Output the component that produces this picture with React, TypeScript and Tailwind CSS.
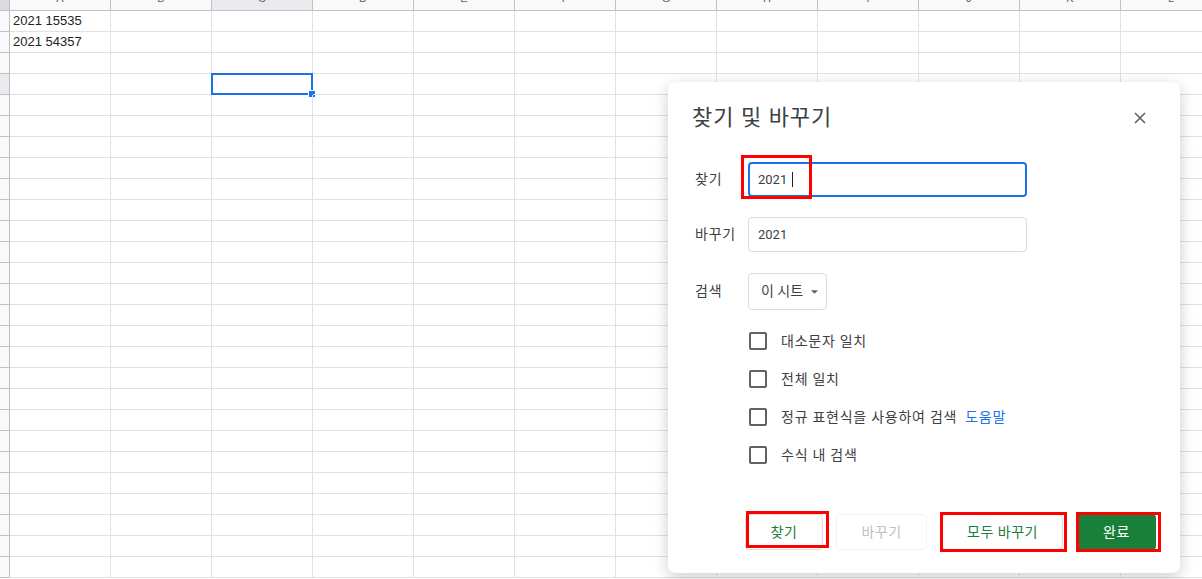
import React from 'react';

const COLS = ['A', 'B', 'C', 'D', 'E', 'F', 'G', 'H', 'I', 'J', 'K', 'L'];
const ROWS = Array.from({ length: 27 }, (_, i) => i + 1);

// cell values keyed by address
const cellData: Record<string, string> = {
  A1: '2021 15535',
  A2: '2021 54357',
};

const options = [
  { id: 'case', label: '대소문자 일치' },
  { id: 'whole', label: '전체 일치' },
  { id: 'regex', label: '정규 표현식을 사용하여 검색', help: '도움말' },
  { id: 'formula', label: '수식 내 검색' },
];

const Checkbox = ({ label, help }: { label: string; help?: string }) => (
  <div className="flex h-[38px] items-center">
    <div className="h-[18px] w-[18px] shrink-0 rounded-[2px] border-2 border-[#5f6368]" />
    <span className="ml-[14px] text-[14px] tracking-[0.75px] text-[#3c4043]">{label}</span>
    {help && <span className="ml-[8px] text-[14px] tracking-[0.75px] text-[#1a73e8]">{help}</span>}
  </div>
);

const RedBox = ({ className }: { className: string }) => (
  <div className={`pointer-events-none absolute border-[3px] border-[#ff0000] ${className}`} />
);

function Sheet() {
  return (
    <div className="flex flex-col font-['Liberation_Sans',Arial,sans-serif]">
      {/* column header, scrolled so only the bottom of the letters shows */}
      <div className="flex h-[11px]">
        <div className="w-[10px] shrink-0 border-r border-b border-[#c0c0c0] bg-[#dadce0]" />
        {COLS.map((c) => (
          <div
            key={c}
            className={`relative w-[101px] shrink-0 overflow-hidden border-r border-b border-[#c0c0c0] ${
              c === 'C' ? 'bg-[#e8eaed]' : 'bg-[#f8f9fa]'
            }`}
          >
            <span className="absolute inset-x-0 bottom-[6px] text-center text-[11px] leading-[11px] text-[#5f6368]">
              {c}
            </span>
          </div>
        ))}
      </div>
      {ROWS.map((r) => (
        <div key={r} className="flex h-[21px]">
          <div
            className={`w-[10px] shrink-0 border-r border-b border-[#c0c0c0] ${
              r === 4 ? 'bg-[#e8eaed]' : 'bg-[#f8f9fa]'
            }`}
          />
          {COLS.map((c) => (
            <div
              key={c}
              className="relative w-[101px] shrink-0 border-r border-b border-[#e2e2e2] pl-[3px] text-[13px] leading-[20px] text-[#222]"
            >
              {cellData[`${c}${r}`]}
              {c === 'C' && r === 4 && (
                <div className="absolute -inset-px border-2 border-[#1a73e8]">
                  <div className="absolute right-[-5px] bottom-[-5px] h-[8px] w-[8px] border border-white bg-[#1a73e8]" />
                </div>
              )}
            </div>
          ))}
        </div>
      ))}
    </div>
  );
}

function FindReplaceDialog() {
  return (
    <div className="absolute top-[82px] left-[668px] flex h-[491px] w-[512px] flex-col rounded-lg bg-white px-6 pt-[22px] pb-[23px] font-[Roboto,'Noto_Sans_CJK_KR',sans-serif] shadow-[0_4px_16px_rgba(0,0,0,0.2)]">
      <div className="flex h-[28px] items-center justify-between">
        <h2 className="text-[22px] leading-[28px] tracking-[1px] text-[#3c4043]">찾기 및 바꾸기</h2>
        <button type="button" className="mr-1 flex h-6 w-6 items-center justify-center" aria-label="닫기">
          <svg width="12" height="12" viewBox="0 0 12 12">
            <path d="M1 1L11 11M11 1L1 11" stroke="#5f6368" strokeWidth="1.6" />
          </svg>
        </button>
      </div>

      <div className="mt-[30px] flex h-[35px] items-center">
        <span className="w-[56px] pl-[3px] text-[14px] tracking-[0.75px] text-[#3c4043]">찾기</span>
        <div className="flex h-[35px] w-[279px] items-center rounded-[4px] border-2 border-[#1a73e8] pl-[8px] text-[13px] text-[#3c4043]">
          2021
          <span className="ml-[5px] inline-block h-[15px] w-px bg-[#202124]" />
        </div>
      </div>

      <div className="mt-[20px] flex h-[35px] items-center">
        <span className="w-[56px] pl-[3px] text-[14px] tracking-[0.75px] text-[#3c4043]">바꾸기</span>
        <div className="flex h-[35px] w-[279px] items-center rounded-[4px] border border-[#dadce0] pl-[9px] text-[13px] text-[#3c4043]">
          2021
        </div>
      </div>

      <div className="mt-[21px] flex h-[37px] items-center">
        <span className="w-[56px] pl-[3px] text-[14px] tracking-[0.75px] text-[#3c4043]">검색</span>
        <div className="flex h-[37px] w-[79px] items-center rounded-[4px] border border-[#dadce0] pl-[12px] text-[14px] text-[#3c4043]">
          이 시트
          <svg className="ml-[8px]" width="7" height="4" viewBox="0 0 10 5">
            <path d="M0 0l5 5 5-5z" fill="#5f6368" />
          </svg>
        </div>
      </div>

      <div className="mt-[12px] ml-[57px] flex flex-col">
        {options.map((o) => (
          <Checkbox key={o.id} label={o.label} help={o.help} />
        ))}
      </div>

      <div className="mt-auto flex h-[36px] justify-end text-[14px] tracking-[0.5px]">
        <button type="button" className="w-[78px] rounded-[4px] border border-[#dadce0] text-[#188038]">
          찾기
        </button>
        <button type="button" className="ml-[13px] w-[91px] rounded-[4px] border border-[#f1f3f4] text-[#bdc1c6]">
          바꾸기
        </button>
        <button type="button" className="ml-[15px] w-[121px] rounded-[4px] border border-[#dadce0] text-[#188038]">
          모두 바꾸기
        </button>
        <button type="button" className="ml-[14px] w-[79px] rounded-[4px] bg-[#188038] text-white">
          완료
        </button>
      </div>

      {/* annotation boxes drawn over the dialog */}
      <RedBox className="top-[73px] left-[73px] h-[44px] w-[71px]" />
      <RedBox className="top-[429px] left-[78px] h-[37px] w-[83px]" />
      <RedBox className="top-[430px] left-[272px] h-[40px] w-[127px]" />
      <RedBox className="top-[430px] left-[408px] h-[40px] w-[85px]" />
    </div>
  );
}

export default function App() {
  return (
    <div className="relative h-[579px] w-[1202px] overflow-hidden bg-white">
      <Sheet />
      <FindReplaceDialog />
    </div>
  );
}
